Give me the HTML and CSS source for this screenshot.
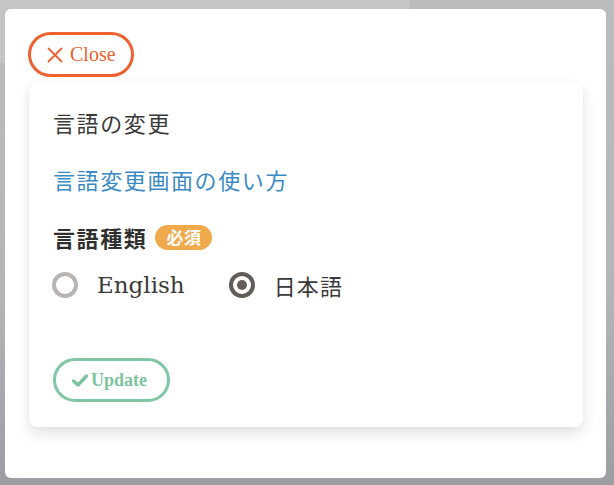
FILE: index.html
```html
<!DOCTYPE html>
<html lang="ja">
<head>
<meta charset="utf-8">
<title>言語の変更</title>
<link rel="stylesheet" href="styles.css">
</head>
<body>
<div class="backdrop"></div>
<div class="modal">
  <button class="btn btn-close" type="button">
    <svg class="ic-x" width="16" height="16" viewBox="0 0 16 16"><path d="M1.5 1.5 L14.5 14.5 M14.5 1.5 L1.5 14.5" stroke="currentColor" stroke-width="1.8" fill="none" stroke-linecap="round"/></svg>
    <span>Close</span>
  </button>
  <div class="card">
    <div class="title">言語の変更</div>
    <a class="help" href="#">言語変更画面の使い方</a>
    <div class="label">言語種類<span class="badge">必須</span></div>
    <div class="radios">
      <label class="radio"><span class="dot"></span><span class="rlabel en">English</span></label>
      <label class="radio checked"><span class="dot"></span><span class="rlabel">日本語</span></label>
    </div>
    <button class="btn btn-update" type="button">
      <svg class="ic-check" width="16" height="13" viewBox="0 0 16 13"><path d="M1.5 7 L6 11 L14.5 2" stroke="currentColor" stroke-width="3.4" fill="none" stroke-linecap="round" stroke-linejoin="round"/></svg>
      <span>Update</span>
    </button>
  </div>
</div>
</body>
</html>
```
FILE: styles.css
```css
html, body {
  margin: 0;
  padding: 0;
}
body {
  width: 614px;
  height: 485px;
  overflow: hidden;
  background: linear-gradient(180deg, #bbbcbe 0%, #b4b5b8 60%, #9d9ea4 100%);
  padding: 9px 8px 7px 5px;
  box-sizing: border-box;
  position: relative;
  font-family: "Noto Sans CJK JP", "Noto Sans", sans-serif;
}
.backdrop {
  position: absolute;
  left: 0;
  top: 0;
  width: 410px;
  height: 63px;
  background: #c5c5c7;
}
.modal {
  position: relative;
  width: 601px;
  height: 469px;
  background: #ffffff;
  border-radius: 6px;
  box-sizing: border-box;
  padding: 23px 23px 0 23px;
  display: flex;
  flex-direction: column;
  align-items: flex-start;
}
.btn {
  display: inline-flex;
  align-items: center;
  background: #fff;
  border-radius: 24px;
  box-sizing: border-box;
  font-family: "Liberation Serif", serif;
  cursor: pointer;
}
.btn-close {
  width: 106px;
  height: 45px;
  border: 3px solid #ec6230;
  color: #ec6230;
  padding: 0 0 0 16px;
  gap: 7px;
  font-size: 20px;
  position: relative;
  z-index: 2;
}
.ic-x { flex: none; }
.card {
  align-self: stretch;
  margin: 5px 0 0 1px;
  width: 554px;
  background: #fff;
  border-radius: 8px;
  box-shadow: 0 7px 14px rgba(0,0,0,0.11), 0 0 4px rgba(0,0,0,0.04);
  box-sizing: border-box;
  padding: 24px 24px 25px 24px;
  display: flex;
  flex-direction: column;
  align-items: flex-start;
}
.title, .help, .label {
  font-size: 22px;
  line-height: 32px;
  letter-spacing: 1.6px;
  color: #3a3a3a;
}
.help {
  margin-top: 25px;
  color: #3b8ac4;
  text-decoration: none;
}
.label {
  margin-top: 26px;
  font-weight: 700;
  color: #2f2f2f;
  display: flex;
  align-items: center;
}
.badge {
  display: inline-flex;
  align-items: center;
  justify-content: center;
  width: 57px;
  height: 25px;
  margin-left: 8px;
  border-radius: 13px;
  background: #f0aa4c;
  color: #fff;
  font-size: 17px;
  font-weight: 700;
  letter-spacing: 0.5px;
}
.radios {
  margin-top: 16px;
  display: flex;
  align-items: center;
  gap: 44px;
  margin-left: -1px;
}
.radio {
  display: flex;
  align-items: center;
  gap: 19px;
  height: 32px;
}
.dot {
  width: 26px;
  height: 26px;
  border-radius: 50%;
  border: 4px solid #b8b4b1;
  box-sizing: border-box;
  display: flex;
  align-items: center;
  justify-content: center;
}
.checked .dot {
  border-color: #625d58;
}
.checked .dot::after {
  content: "";
  width: 10px;
  height: 10px;
  border-radius: 50%;
  background: #625d58;
}
.rlabel {
  font-size: 22px;
  color: #3a3a3a;
  letter-spacing: 1.2px;
}
.rlabel.en {
  font-family: "DejaVu Serif", serif;
  letter-spacing: 0;
  font-size: 23px;
}
.btn-update {
  margin-top: 57px;
  width: 117px;
  height: 44px;
  border: 3px solid #80c6a4;
  color: #7cc4a0;
  padding: 0 0 0 16px;
  gap: 3px;
  font-size: 18px;
  font-weight: 700;
}
.ic-check { flex: none; }
```
